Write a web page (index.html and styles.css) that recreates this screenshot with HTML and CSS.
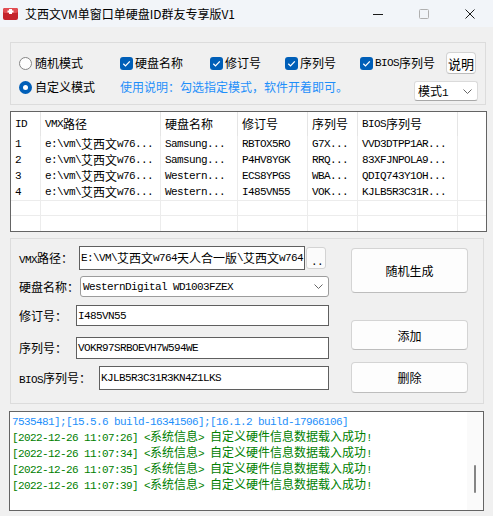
FILE: index.html
```html
<!DOCTYPE html>
<html lang="zh-CN">
<head>
<meta charset="utf-8">
<title>艾西文VM单窗口单硬盘ID群友专享版V1</title>
<link rel="stylesheet" href="styles.css">
</head>
<body>
<div class="win">
  <header class="titlebar">
    <svg class="appicon" width="15" height="12" viewBox="0 0 15 12">
      <rect x="0" y="0" width="15" height="12" rx="2" fill="#c4232b"/>
      <rect x="0" y="0" width="15" height="5" rx="2" fill="#e24d52"/>
      <rect x="6" y="1" width="3" height="5" fill="#fff"/>
      <rect x="4.5" y="2.5" width="6" height="2" fill="#fff"/>
    </svg>
    <span class="title">艾西文VM单窗口单硬盘ID群友专享版V1</span>
    <div class="ctrls">
      <span class="ctl"><svg width="10" height="10" viewBox="0 0 10 10"><path d="M0 5.5H10" stroke="#1a1a1a" stroke-width="1"/></svg></span>
      <span class="ctl"><svg width="10" height="10" viewBox="0 0 10 10"><rect x="0.5" y="0.5" width="9" height="9" rx="1" fill="none" stroke="#b0b0b0"/></svg></span>
      <span class="ctl"><svg width="10" height="10" viewBox="0 0 10 10"><path d="M0.5 0.5L9.5 9.5M9.5 0.5L0.5 9.5" stroke="#1a1a1a" stroke-width="1"/></svg></span>
    </div>
  </header>

  <section class="grp1">
    <div class="row1">
      <label class="opt w101"><span class="radio"></span>随机模式</label>
      <label class="opt w90"><span class="cb"><svg width="13" height="13" viewBox="0 0 13 13"><path d="M3.3 6.8L5.5 8.9L9.8 4.4" fill="none" stroke="#fff" stroke-width="1.3"/></svg></span>硬盘名称</label>
      <label class="opt w75"><span class="cb"><svg width="13" height="13" viewBox="0 0 13 13"><path d="M3.3 6.8L5.5 8.9L9.8 4.4" fill="none" stroke="#fff" stroke-width="1.3"/></svg></span>修订号</label>
      <label class="opt w75"><span class="cb"><svg width="13" height="13" viewBox="0 0 13 13"><path d="M3.3 6.8L5.5 8.9L9.8 4.4" fill="none" stroke="#fff" stroke-width="1.3"/></svg></span>序列号</label>
      <label class="opt w86"><span class="cb"><svg width="13" height="13" viewBox="0 0 13 13"><path d="M3.3 6.8L5.5 8.9L9.8 4.4" fill="none" stroke="#fff" stroke-width="1.3"/></svg></span><span class="m">BIOS</span>序列号</label>
      <button class="btn-help">说明</button>
    </div>
    <div class="row2">
      <label class="opt w101"><span class="radio on"></span>自定义模式</label>
      <span class="hint">使用说明：勾选指定模式，软件开着即可。</span>
      <div class="mode-select"><span>模式<span class="m">1</span></span><svg width="9" height="5" viewBox="0 0 9 5"><path d="M0.5 0.5L4.5 4.5L8.5 0.5" fill="none" stroke="#666"/></svg></div>
    </div>
  </section>

  <section class="tbl">
    <div class="th"><span class="m">ID</span></div>
    <div class="th"><span class="m">VMX</span>路径</div>
    <div class="th">硬盘名称</div>
    <div class="th">修订号</div>
    <div class="th">序列号</div>
    <div class="th"><span class="m">BIOS</span>序列号</div>
    <div class="th"></div>

    <div class="m">1</div>
    <div class="m">e:\vm\<span class="h">艾西文</span>w76...</div>
    <div class="m">Samsung...</div>
    <div class="m">RBTOX5RO</div>
    <div class="m">G7X...</div>
    <div class="m">VVD3DTPP1AR...</div>
    <div></div>

    <div class="m">2</div>
    <div class="m">e:\vm\<span class="h">艾西文</span>w76...</div>
    <div class="m">Samsung...</div>
    <div class="m">P4HV8YGK</div>
    <div class="m">RRQ...</div>
    <div class="m">83XFJNPOLA9...</div>
    <div></div>

    <div class="m">3</div>
    <div class="m">e:\vm\<span class="h">艾西文</span>w76...</div>
    <div class="m">Western...</div>
    <div class="m">ECS8YPGS</div>
    <div class="m">WBA...</div>
    <div class="m">QDIQ743Y1OH...</div>
    <div></div>

    <div class="m">4</div>
    <div class="m">e:\vm\<span class="h">艾西文</span>w76...</div>
    <div class="m">Western...</div>
    <div class="m">I485VN55</div>
    <div class="m">VOK...</div>
    <div class="m">KJLB5R3C31R...</div>
    <div></div>

    <div class="e"></div><div class="e"></div><div class="e"></div><div class="e"></div><div class="e"></div><div class="e"></div><div class="e"></div>
    <div class="e"></div><div class="e"></div><div class="e"></div><div class="e"></div><div class="e"></div><div class="e"></div><div class="e"></div>
  </section>

  <section class="grp2">
    <div class="form">
      <div class="frow ra">
        <span class="lbl l60"><span class="m">VMX</span>路径：</span>
        <div class="inp fixed m">E:\VM\<span class="h">艾西文</span>w764<span class="h">天人合一版</span>\<span class="h">艾西文</span>w764</div>
        <button class="dots m">..</button>
      </div>
      <div class="frow rb">
        <span class="lbl l61">硬盘名称：</span>
        <div class="sel m"><span>WesternDigital WD1003FZEX</span><svg width="9" height="5" viewBox="0 0 9 5"><path d="M0.5 0.5L4.5 4.5L8.5 0.5" fill="none" stroke="#666"/></svg></div>
      </div>
      <div class="frow rc">
        <span class="lbl l57">修订号：</span>
        <div class="inp m">I485VN55</div>
      </div>
      <div class="frow rd">
        <span class="lbl l57">序列号：</span>
        <div class="inp m">VOKR97SRBOEVH7W594WE</div>
      </div>
      <div class="frow re">
        <span class="lbl l80"><span class="m">BIOS</span>序列号：</span>
        <div class="inp m">KJLB5R3C31R3KN4Z1LKS</div>
      </div>
    </div>
    <div class="actions">
      <button class="abtn b1">随机生成</button>
      <button class="abtn b2">添加</button>
      <button class="abtn b3">删除</button>
    </div>
  </section>

  <section class="log">
    <div class="log-text m">
      <div class="ln blue">7535481];[15.5.6 build-16341506];[16.1.2 build-17966106]</div>
      <div class="ln green">[2022-12-26 11:07:26] &lt;<span class="h">系统信息</span>&gt; <span class="h">自定义硬件信息数据载入成功</span>!</div>
      <div class="ln green">[2022-12-26 11:07:34] &lt;<span class="h">系统信息</span>&gt; <span class="h">自定义硬件信息数据载入成功</span>!</div>
      <div class="ln green">[2022-12-26 11:07:35] &lt;<span class="h">系统信息</span>&gt; <span class="h">自定义硬件信息数据载入成功</span>!</div>
      <div class="ln green">[2022-12-26 11:07:39] &lt;<span class="h">系统信息</span>&gt; <span class="h">自定义硬件信息数据载入成功</span>!</div>
    </div>
    <div class="vscroll"><span class="thumb"></span></div>
  </section>
</div>
</body>
</html>
```

FILE: styles.css
```css
* { box-sizing: border-box; margin: 0; padding: 0; }
html, body { width: 493px; height: 516px; overflow: hidden; background: #f0f0f0; }
body {
  font-family: "Noto Sans CJK SC", "Noto Sans", sans-serif;
  font-size: 12px;
  line-height: 16px;
  color: #000;
}
.m {
  font-family: "Liberation Mono", "DejaVu Sans Mono", monospace;
  font-size: 11px;
  letter-spacing: -0.6px;
}
span.m { line-height: 1; }
.h {
  font-family: "Noto Sans CJK SC", sans-serif;
  font-size: 12px;
  letter-spacing: 0;
  line-height: 1;
}
button { font-family: "Noto Sans CJK SC", sans-serif; font-size: 12px; color: #000; cursor: default; }

.win { width: 493px; height: 516px; display: flex; flex-direction: column; background: #f0f0f0; }

/* title bar */
.titlebar { flex: none; height: 27px; background: #f2f5f9; display: flex; align-items: center; }
.appicon { flex: none; margin-left: 3px; }
.title { margin-left: 7px; font-size: 12px; white-space: nowrap; }
.ctrls { margin-left: auto; display: flex; align-self: stretch; }
.ctl { width: 46px; display: flex; align-items: center; justify-content: center; }

/* options group */
.grp1 {
  flex: none;
  margin: 15px 0 0 10px;
  width: 476px;
  height: 63px;
  border: 1px solid #dcdcdc;
  padding: 9px 0 0 8px;
}
.row1 { display: flex; align-items: center; height: 22px; }
.row2 { display: flex; align-items: flex-start; height: 24px; margin-top: 3px; }
.opt { flex: none; display: flex; align-items: center; height: 20px; white-space: nowrap; }
.w101 { width: 101px; }
.w90 { width: 90px; }
.w75 { width: 75px; }
.w86 { width: 86px; }
.radio {
  flex: none;
  width: 13px; height: 13px;
  border-radius: 50%;
  border: 1px solid #858585;
  background: #fdfdfd;
  margin-right: 3px;
}
.radio.on {
  border: none;
  background: #005fb8;
  display: flex; align-items: center; justify-content: center;
}
.radio.on::after { content: ""; width: 5px; height: 5px; border-radius: 50%; background: #fff; }
.cb {
  flex: none;
  width: 13px; height: 13px;
  border-radius: 3px;
  background: #005fb8;
  margin-right: 2px;
  display: flex;
}
.btn-help {
  flex: none;
  width: 30px; height: 22px;
  background: #fdfdfd;
  border: 1px solid #d3d3d3;
  border-bottom-color: #bcbcbc;
  border-radius: 4px;
  font-size: 13px;
  padding: 0;
}
.hint { flex: none; width: 294px; height: 20px; line-height: 20px; color: #1e8ffa; white-space: nowrap; }
.mode-select {
  flex: none;
  margin-top: 4px;
  width: 64px; height: 20px;
  background: #fff;
  border: 1px solid #dadada;
  border-bottom-color: #a8a8a8;
  border-radius: 3px;
  padding: 0 5px 0 3px;
  display: flex; align-items: center; justify-content: space-between;
}

/* list view */
.tbl {
  flex: none;
  margin: 6px 0 0 10px;
  width: 477px;
  height: 121px;
  border: 1px solid #646464;
  background: #fff;
  display: grid;
  grid-template-columns: 30px 120px 77px 70px 50px 100px 1fr;
  grid-template-rows: 24px repeat(4, 16px) 15px 1fr;
}
.tbl > div {
  border-right: 1px solid #ececec;
  padding-left: 4px;
  white-space: nowrap;
  overflow: hidden;
  display: flex;
  align-items: center;
}
.tbl > div:nth-child(7n) { border-right: none; }
.tbl > .th { border-right-color: #e5e5e5; }
.tbl > .e { border-top: 1px solid #ececec; }

/* edit group */
.grp2 {
  flex: none;
  margin: 6px 0 0 10px;
  width: 474px;
  height: 166px;
  border: 1px solid #dcdcdc;
  padding: 7px 0 0 8px;
  display: flex;
}
.form { flex: none; width: 310px; display: flex; flex-direction: column; }
.frow { flex: none; display: flex; align-items: center; }
.ra { height: 24px; }
.rb { height: 21px; margin-top: 6px; }
.rc { height: 21px; margin-top: 8px; }
.rd { height: 22px; margin-top: 11px; }
.re { height: 24px; margin-top: 7px; }
.lbl { flex: none; white-space: nowrap; }
.l60 { width: 60px; }
.l61 { width: 61px; }
.l57 { width: 57px; }
.l80 { width: 80px; }
.inp {
  flex: 1;
  align-self: stretch;
  background: #fff;
  border: 1px solid #5f5f5f;
  padding-left: 1px;
  display: flex;
  align-items: center;
  white-space: nowrap;
  overflow: hidden;
}
.inp.fixed { flex: none; width: 226px; }
.dots {
  flex: none;
  width: 20px; height: 22px;
  margin-left: 1px;
  background: #fbfbfb;
  border: 1px solid #d3d3d3;
  border-radius: 3px;
  padding: 7px 0 0 2px;
  font-family: "Liberation Mono", monospace;
  font-size: 11px;
}
.sel {
  flex: 1;
  align-self: stretch;
  background: #fff;
  border: 1px solid #9c9c9c;
  border-radius: 3px;
  padding: 0 5px 0 2px;
  display: flex;
  align-items: center;
  justify-content: space-between;
  white-space: nowrap;
}
.actions { flex: none; margin-left: 22px; width: 117px; display: flex; flex-direction: column; padding-top: 2px; }
.abtn {
  flex: none;
  width: 117px;
  background: #fdfdfd;
  border: 1px solid #d4d4d4;
  border-bottom-color: #bdbdbd;
  border-radius: 4px;
}
.b1 { height: 45px; }
.b2 { height: 30px; margin-top: 27px; }
.b3 { height: 31px; margin-top: 12px; }

/* log */
.log {
  flex: none;
  margin: 7px 0 0 9px;
  width: 475px;
  height: 100px;
  border: 1px solid #646464;
  background: #fff;
  display: flex;
}
.log-text { flex: 1; padding: 2px 0 0 2px; overflow: hidden; }
.ln { height: 16px; line-height: 16px; white-space: pre; }
.blue { color: #1e8ffa; }
.green { color: #008000; }
.vscroll { flex: none; width: 16px; background: #fafafa; display: flex; justify-content: center; }
.thumb { width: 2px; height: 28px; margin-top: 53px; background: #858585; border-radius: 1px; }
```
